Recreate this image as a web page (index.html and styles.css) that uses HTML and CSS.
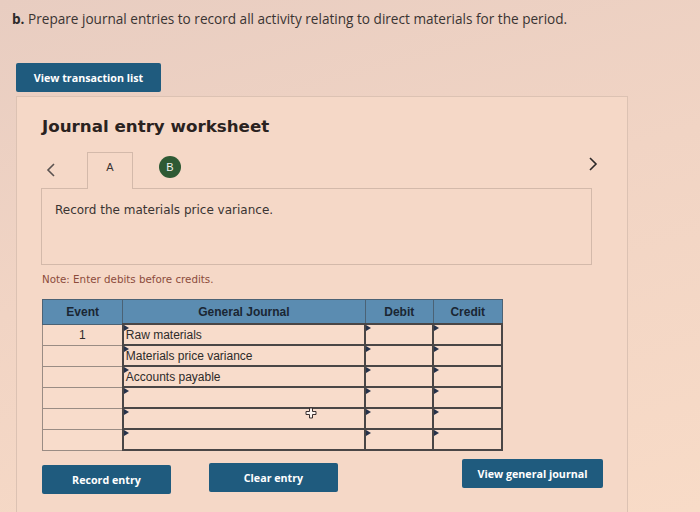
FILE: index.html
```html
<!DOCTYPE html>
<html>
<head>
  <meta charset="UTF-8">
  <title>Journal entry worksheet</title>
  <link rel="stylesheet" href="styles.css">
</head>
<body>
  <p class="prompt"><b>b.</b> Prepare journal entries to record all activity relating to direct materials for the period.</p>
  <a class="btn btnList" href="#">View transaction list</a>

  <div class="worksheet">
    <h1>Journal entry worksheet</h1>

    <div class="tabRow">
      <svg class="chevron" width="10" height="16" viewBox="0 0 10 16"><polyline points="8,2 2,8 8,14" /></svg>
      <span class="tab">A</span>
      <span class="step">B</span>
      <svg class="chevron next" width="10" height="16" viewBox="0 0 10 16"><polyline points="2,2 8,8 2,14" /></svg>
    </div>
    <div class="taskBox">Record the materials price variance.</div>

    <p class="note">Note: Enter debits before credits.</p>

    <table class="journal">
      <tr>
        <th class="colEvent">Event</th>
        <th class="colAccount">General Journal</th>
        <th class="colAmount">Debit</th>
        <th class="colAmount">Credit</th>
      </tr>
      <tr>
        <td class="event">1</td>
        <td class="field">Raw materials</td>
        <td class="field"></td>
        <td class="field"></td>
      </tr>
      <tr>
        <td class="event"></td>
        <td class="field">Materials price variance</td>
        <td class="field"></td>
        <td class="field"></td>
      </tr>
      <tr>
        <td class="event"></td>
        <td class="field">Accounts payable</td>
        <td class="field"></td>
        <td class="field"></td>
      </tr>
      <tr>
        <td class="event"></td>
        <td class="field"></td>
        <td class="field"></td>
        <td class="field"></td>
      </tr>
      <tr>
        <td class="event"></td>
        <td class="field"></td>
        <td class="field"></td>
        <td class="field"></td>
      </tr>
      <tr>
        <td class="event"></td>
        <td class="field"></td>
        <td class="field"></td>
        <td class="field"></td>
      </tr>
    </table>

    <div class="actions">
      <a class="btn btnRecord" href="#">Record entry</a>
      <a class="btn btnClear" href="#">Clear entry</a>
      <a class="btn btnJournal" href="#">View general journal</a>
    </div>

    <!-- mouse pointer caught in the shot -->
    <svg class="cursor" width="12" height="12" viewBox="0 0 12 12">
      <path d="M4.5 1h3v3.5H11v3H7.5V11h-3V7.5H1v-3h3.5z" />
    </svg>
  </div>
</body>
</html>
```

FILE: styles.css
```css
body {
  margin: 0;
  height: 512px;
  overflow: hidden;
  color: #3a3432;
  font-family: "Open Sans", Lato, sans-serif;
  background: linear-gradient(165deg, #e8cdc1 0%, #f1d4c4 45%, #f8dbc7 100%);
}

.prompt {
  margin: 0;
  padding: 10px 0 0 12px;
  font-size: 13.6px;
  line-height: 18px;
}
.prompt b {
  color: #2c2a2a;
}

/* buttons */
.btn {
  display: flex;
  align-items: center;
  justify-content: center;
  height: 29px;
  box-sizing: border-box;
  border-radius: 2px;
  background-color: #1f5b7e;
  color: #ffffff;
  font-family: "Open Sans", Lato, sans-serif;
  font-size: 10.7px;
  font-weight: bold;
  text-decoration: none;
}
.btnList {
  width: 145px;
  margin: 35px 0 0 16px;
}

/* worksheet panel */
.worksheet {
  position: relative;
  width: 612px;
  height: 420px;
  box-sizing: border-box;
  margin: 4px 0 0 16px;
  padding: 0 24px 0 25px;
  border: 1px solid #dcc2b3;
  background-color: #f5d8c7;
}
.worksheet h1 {
  margin: 0;
  padding-top: 20px;
  font-family: "DejaVu Sans", Verdana, sans-serif;
  font-size: 16.7px;
  line-height: 19px;
  color: #2a2220;
}

.tabRow {
  display: flex;
  align-items: center;
  height: 36px;
  margin: 16px 0 0 -1px;
  padding-right: 5px;
}
.chevron {
  margin-left: 5px;
  fill: none;
  stroke: #5a5250;
  stroke-width: 1.6;
}
.chevron.next {
  margin-left: auto;
  margin-top: -12px;
  stroke: #2c2828;
}
.tab {
  display: flex;
  justify-content: center;
  align-self: stretch;
  width: 46px;
  margin: 0 0 -1px 31px;
  padding-top: 8px;
  box-sizing: border-box;
  border: 1px solid #d3b9aa;
  border-bottom: none;
  background-color: #f5d8c7;
  position: relative;
  z-index: 1;
  font-family: "Liberation Sans", Arial, sans-serif;
  font-size: 11px;
  color: #3a3432;
}
.step {
  display: flex;
  align-items: center;
  justify-content: center;
  width: 22px;
  height: 22px;
  margin: -7px 0 0 26px;
  border-radius: 50%;
  background-color: #2e5a34;
  color: #f2f2f0;
  font-family: "Liberation Sans", Arial, sans-serif;
  font-size: 11px;
}

.taskBox {
  width: 551px;
  height: 77px;
  box-sizing: border-box;
  margin-left: -1px;
  padding: 14px 0 0 13px;
  border: 1px solid #d3b9aa;
  font-family: "DejaVu Sans", Verdana, sans-serif;
  font-size: 12px;
  color: #3a3432;
}

.note {
  margin: 8px 0 0;
  font-family: "DejaVu Sans", Verdana, sans-serif;
  font-size: 10.3px;
  line-height: 13px;
  color: #8c4b3b;
}

/* journal grid */
.journal {
  width: 461px;
  margin-top: 13px;
  border-collapse: collapse;
  font-family: "Liberation Sans", Arial, sans-serif;
  font-size: 12px;
  color: #2e2b2a;
}
.journal th {
  height: 23px;
  padding: 0;
  border: 1px solid #4b6275;
  background-color: #5b8cb1;
  color: #1a2633;
  font-weight: bold;
}
.colEvent { width: 80px; }
.colAccount { width: 244px; }
.colAmount { width: 68px; }
.journal td {
  height: 19px;
  padding: 0 2px;
  border: 1px solid #9a8c84;
  background-color: #f8dccb;
}
.journal td.event {
  text-align: center;
}
.journal td.field {
  position: relative;
  border: 2px solid #4a4646;
}
.journal td.field::before {
  content: "";
  position: absolute;
  left: 0;
  top: 0;
  border-left: 5px solid #26324a;
  border-top: 3px solid transparent;
  border-bottom: 3px solid transparent;
}

.actions {
  display: flex;
  align-items: flex-start;
  margin-top: 10px;
}
.btnRecord {
  width: 129px;
  margin-top: 4px;
}
.btnClear {
  width: 129px;
  margin: 2px 0 0 38px;
}
.btnJournal {
  width: 141px;
  margin-left: auto;
  margin-top: -2px;
}

.cursor {
  position: absolute;
  left: 288px;
  top: 310px;
  fill: #fbf3ee;
  stroke: #3a3030;
  stroke-width: 1;
}
```
